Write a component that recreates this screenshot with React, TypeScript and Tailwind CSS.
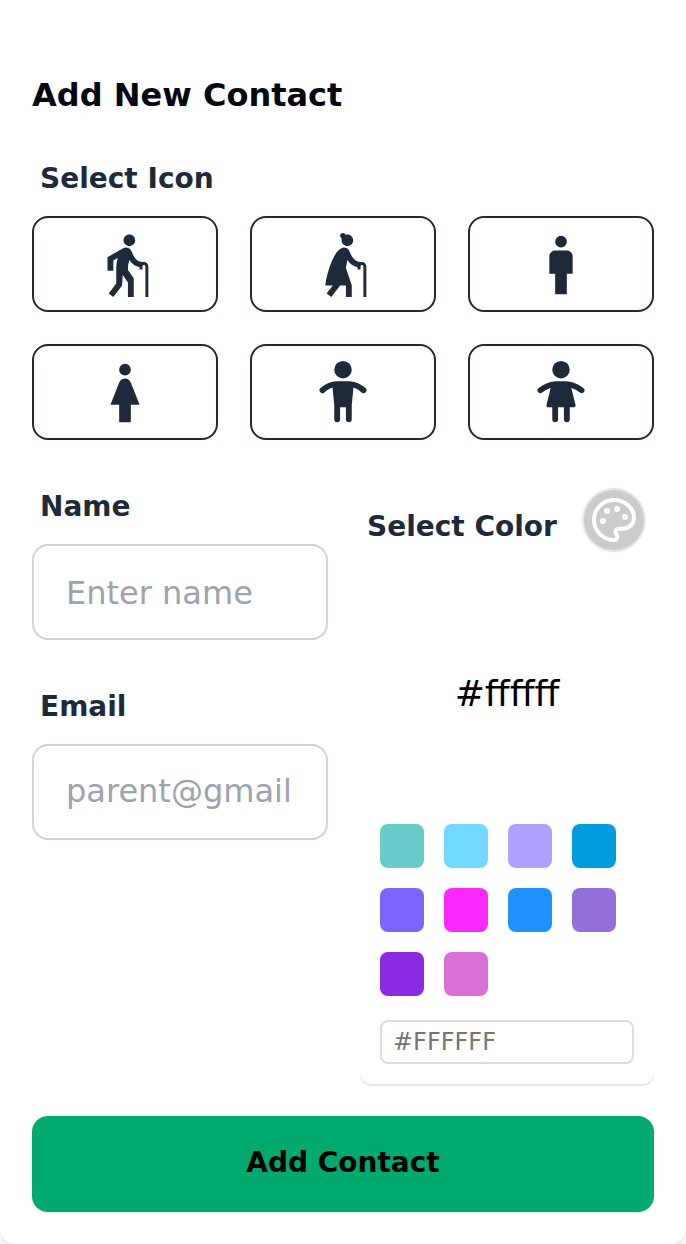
import { MdElderly, MdElderlyWoman, MdMan, MdWoman } from "react-icons/md";

type IconProps = { className?: string };

function Boy({ className }: IconProps) {
  return (
    <svg viewBox="0 0 24 24" className={className} fill="currentColor">
      <circle cx="12" cy="4" r="3" />
      <path d="M4.95 11.05Q7.3 8.95 9.9 8.95H14.1Q16.7 8.95 19.05 11.05" fill="none" stroke="currentColor" strokeWidth="2" strokeLinecap="round" />
      <path d="M8.3 9L9 16.2V21a1 1 0 0 0 2 0V16.9H13V21a1 1 0 0 0 2 0V16.2L15.7 9Z" />
    </svg>
  );
}

function Girl({ className }: IconProps) {
  return (
    <svg viewBox="0 0 24 24" className={className} fill="currentColor">
      <circle cx="12" cy="4" r="3" />
      <path d="M4.95 11.05Q7.8 8.95 10.2 8.95H13.8Q16.2 8.95 19.05 11.05" fill="none" stroke="currentColor" strokeWidth="2" strokeLinecap="round" />
      <path d="M8.8 9L7.05 15.9Q6.85 16.9 7.8 16.9H9V21a1 1 0 0 0 2 0V16.9H13V21a1 1 0 0 0 2 0V16.9H16.2Q17.15 16.9 16.95 15.9L15.2 9Z" />
    </svg>
  );
}

function Palette({ className }: IconProps) {
  return (
    <svg viewBox="0 0 24 24" className={className} fill="none" stroke="currentColor" strokeWidth="2" strokeLinecap="round" strokeLinejoin="round">
      <circle cx="13.5" cy="6.5" r=".5" fill="currentColor" />
      <circle cx="17.5" cy="10.5" r=".5" fill="currentColor" />
      <circle cx="8.5" cy="7.5" r=".5" fill="currentColor" />
      <circle cx="6.5" cy="12.5" r=".5" fill="currentColor" />
      <path d="M12 2C6.5 2 2 6.5 2 12s4.5 10 10 10c.926 0 1.648-.746 1.648-1.688 0-.437-.18-.835-.437-1.125-.29-.289-.438-.652-.438-1.125a1.64 1.64 0 0 1 1.668-1.668h1.996c3.051 0 5.555-2.503 5.555-5.554C21.965 6.012 17.461 2 12 2z" />
    </svg>
  );
}

const people = [MdElderly, MdElderlyWoman, MdMan, MdWoman, Boy, Girl];

const swatches = [
  "bg-[#68ccca]", "bg-[#73d8ff]", "bg-[#aea1ff]", "bg-[#009ce0]", "bg-[#7b64ff]",
  "bg-[#fa28ff]", "bg-[#1e90ff]", "bg-[#9370db]", "bg-[#8a2be2]", "bg-[#da70d6]",
];

function Field({ label, placeholder, inputClass }: { label: string; placeholder: string; inputClass: string }) {
  return (
    <label className="flex flex-col">
      <span className="pt-px pl-2 text-[28px] leading-10 font-semibold text-gray-800">{label}</span>
      <input
        placeholder={placeholder}
        className={`mt-[17px] h-24 w-full rounded-2xl border-2 border-[#d1d3d8] bg-white px-8 text-[32px] placeholder:text-[#9ca3af] ${inputClass}`}
      />
    </label>
  );
}

export default function App() {
  return (
    <div className="flex h-[1244px] w-full flex-col rounded-b-2xl bg-white px-8 pt-[71px] font-['DejaVu_Sans',sans-serif] text-black shadow-lg">
      <h1 className="text-[32px] leading-12 font-bold text-[#030712]">Add New Contact</h1>

      <h2 className="mt-10 pl-2 text-[28px] leading-10 font-semibold text-gray-800">Select Icon</h2>
      <div className="mt-[17px] grid grid-cols-3 gap-8">
        {people.map((Icon, i) => (
          <button key={i} className="flex h-24 items-center justify-center rounded-2xl border-2 border-gray-800 pt-0.5 text-gray-800">
            <Icon className="size-[70px]" />
          </button>
        ))}
      </div>

      <div className="mt-[46px] flex gap-8">
        <div className="flex w-[296px] flex-col gap-[46px]">
          <Field label="Name" placeholder="Enter name" inputClass="pt-0.5" />
          <Field label="Email" placeholder="parent@gmail" inputClass="pb-0.5" />
        </div>

        <div className="flex w-[294px] flex-col">
          <div className="flex h-[98px] items-start justify-between pt-[2px] pr-2 pl-[7px]">
            <span className="pt-[19px] text-[28px] leading-10 font-semibold whitespace-nowrap text-gray-800">Select Color</span>
            <button className="flex size-16 shrink-0 items-center justify-center rounded-full border-2 border-[#e2e8f0] bg-[#ccc] text-white">
              <Palette className="size-12 shrink-0" />
            </button>
          </div>
          <div className="rounded-xl bg-white shadow-[0_2px_rgba(0,0,0,0.1)]">
            <div className="flex h-[220px] items-center justify-center text-[36px]">#ffffff</div>
            <div className="px-5 pt-5 pb-5">
              <div className="grid grid-cols-[repeat(4,44px)] gap-5">
                {swatches.map((color) => (
                  <div key={color} className={`size-11 rounded-lg ${color}`} />
                ))}
              </div>
              <input
                placeholder="#FFFFFF"
                className="mt-6 block h-11 w-full rounded-lg px-[13px] text-[24px] shadow-[inset_0_0_0_2px_#ddd] placeholder:text-[#757575]"
              />
            </div>
          </div>
        </div>
      </div>

      <button className="mt-8 h-24 w-full shrink-0 rounded-2xl bg-[#00a96e] pb-0.5 text-[28px] font-semibold text-black shadow-sm">
        Add Contact
      </button>
    </div>
  );
}
